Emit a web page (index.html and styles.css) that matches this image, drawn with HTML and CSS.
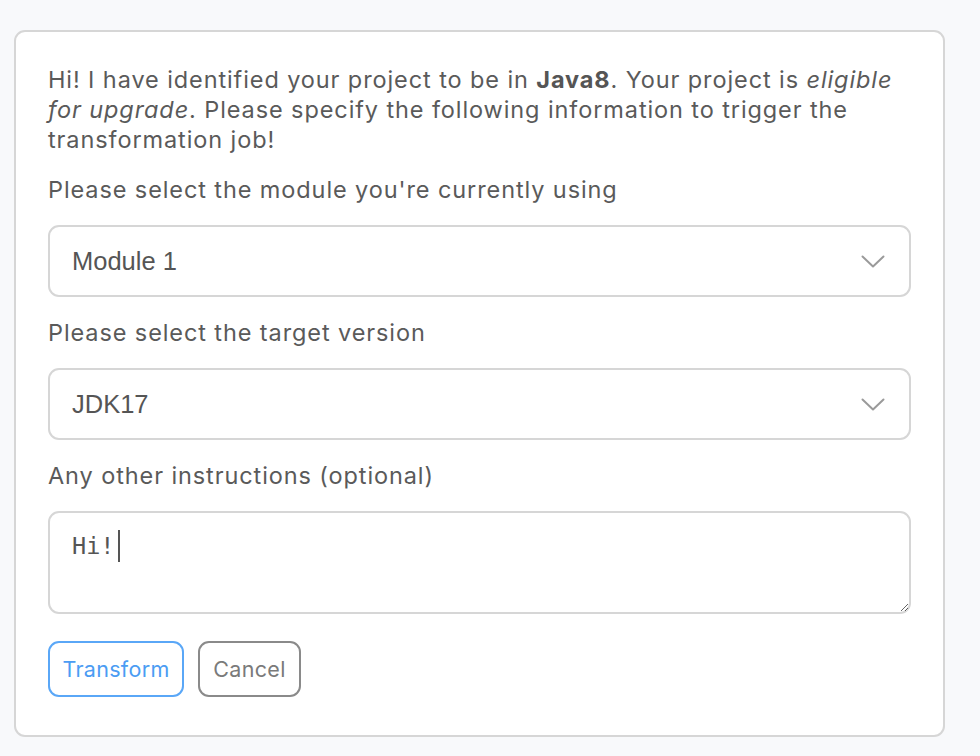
FILE: index.html
```html
<!DOCTYPE html>
<html lang="en">
<head>
<meta charset="utf-8">
<title>Transformation</title>
<link rel="stylesheet" href="styles.css">
</head>
<body>
<div class="card">
  <p class="intro">Hi! I have identified your project to be in <b>Java8</b>. Your project is <i>eligible for upgrade</i>. Please specify the following information to trigger the transformation job!</p>
  <label class="label">Please select the module you're currently using</label>
  <div class="select">
    <span class="select-text">Module 1</span>
    <svg class="chev" width="24" height="14" viewBox="0 0 24 14"><path d="M1.5 1.5 L12 11.5 L22.5 1.5" fill="none" stroke="#9a9a9a" stroke-width="2" stroke-linecap="round" stroke-linejoin="round"/></svg>
  </div>
  <label class="label">Please select the target version</label>
  <div class="select">
    <span class="select-text">JDK17</span>
    <svg class="chev" width="24" height="14" viewBox="0 0 24 14"><path d="M1.5 1.5 L12 11.5 L22.5 1.5" fill="none" stroke="#9a9a9a" stroke-width="2" stroke-linecap="round" stroke-linejoin="round"/></svg>
  </div>
  <label class="label">Any other instructions (optional)</label>
  <div class="ta-wrap">
    <textarea class="ta">Hi!</textarea>
    <span class="caret"></span>
  </div>
  <div class="actions">
    <button class="btn btn-primary">Transform</button>
    <button class="btn btn-secondary">Cancel</button>
  </div>
</div>
</body>
</html>
```

FILE: styles.css
```css
html, body {
  margin: 0;
  padding: 0;
  background: #f8f9fb;
}
body {
  padding: 30px 0 0 14px;
  font-family: Inter, "Noto Sans", sans-serif;
  color: #5a5a5a;
}
.card {
  box-sizing: border-box;
  width: 931px;
  height: 707px;
  background: #ffffff;
  border: 2px solid #d6d6d6;
  border-radius: 11px;
  padding: 33px 32px 0 32px;
  display: flex;
  flex-direction: column;
}
.intro {
  margin: 0;
  font-size: 23.5px;
  line-height: 30px;
  letter-spacing: 0.9px;
}
.intro b { font-weight: 700; color: #555; }
.label {
  display: block;
  margin-top: 20px;
  font-size: 23.5px;
  line-height: 30px;
  letter-spacing: 0.9px;
}
.select {
  box-sizing: border-box;
  margin-top: 20px;
  height: 72px;
  border: 2px solid #d6d6d6;
  border-radius: 11px;
  display: flex;
  align-items: center;
  justify-content: space-between;
  padding: 0 24px 0 22px;
}
.select + .label { margin-top: 21px; }
.select-text {
  font-family: "Liberation Sans", Arial, sans-serif;
  font-size: 25.5px;
  color: #555;
}
.chev { display: block; margin-top: 2px; }
.ta-wrap {
  position: relative;
  margin-top: 20px;
  height: 103px;
}
.ta {
  box-sizing: border-box;
  display: block;
  width: 100%;
  height: 103px;
  border: 2px solid #d6d6d6;
  border-radius: 11px;
  padding: 18px 22px 10px;
  font-family: "DejaVu Sans Mono", monospace;
  font-size: 23.5px;
  line-height: 30px;
  color: #555;
  background: #fff;
  outline: none;
  resize: vertical;
}
.caret {
  position: absolute;
  left: 70px;
  top: 19px;
  width: 2px;
  height: 32px;
  background: #555;
}
.actions {
  display: flex;
  gap: 14px;
  margin-top: 27px;
}
.btn {
  box-sizing: border-box;
  height: 56px;
  border-radius: 11px;
  background: #fff;
  font-family: Inter, "Noto Sans", sans-serif;
  font-size: 21.5px;
  letter-spacing: 0.3px;
  padding: 0 10px;
  cursor: pointer;
}
.btn-primary {
  width: 136px;
  border: 2px solid #5aa7f7;
  color: #4b9cf3;
}
.btn-secondary {
  width: 103px;
  border: 2px solid #8a8a8a;
  color: #7a7a7a;
}
```
